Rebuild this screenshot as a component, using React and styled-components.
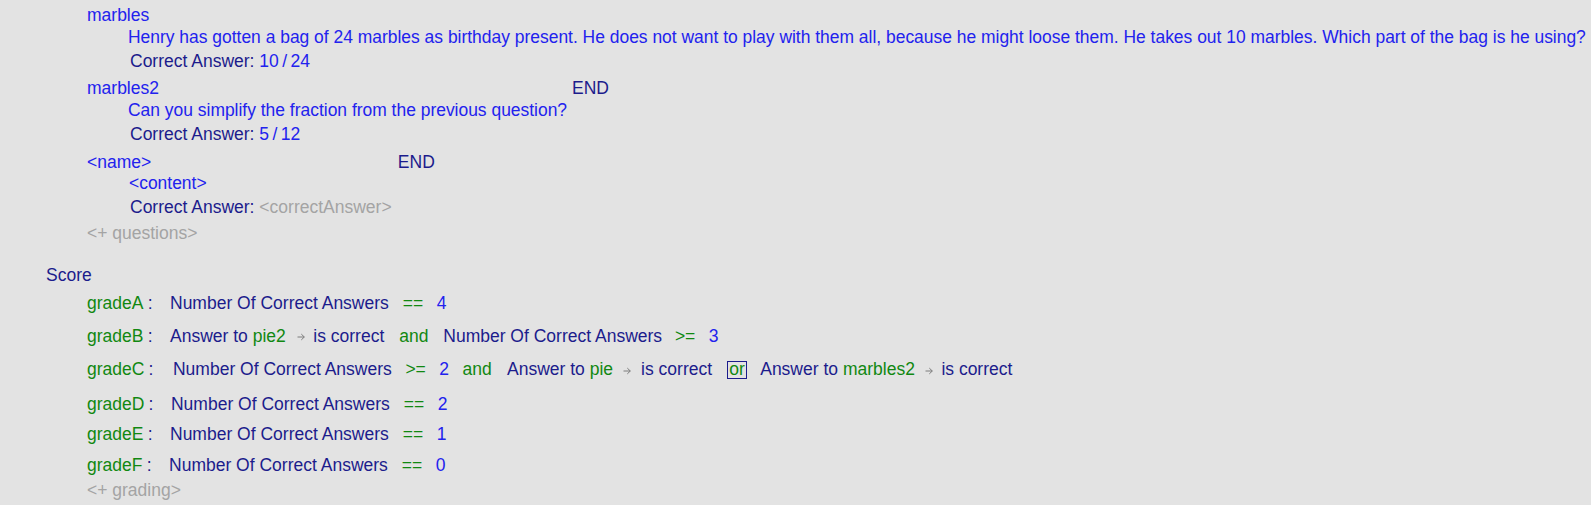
import React from 'react';
import styled, { createGlobalStyle } from 'styled-components';

const Global = createGlobalStyle`
  html, body {
    margin: 0;
    background: #e3e3e3;
    overflow: hidden;
  }
  body {
    font-family: "Liberation Sans", Arial, sans-serif;
    font-size: 17.5px;
    line-height: 20px;
  }
`;

const BLUE = '#2222ee';
const NAVY = '#1c1c8c';
const GREEN = '#118811';
const GRAY = '#a4a4a4';

const Page = styled.div`
  padding: 5.4px 0 0 46px;
  white-space: nowrap;
`;

const Questions = styled.div`
  margin-left: 41px;
`;

// name | END on the first line, the body rows sit under the name column
const QuestionBlock = styled.div`
  display: grid;
  grid-template-columns: max-content max-content;
  width: max-content;
  & + & {
    margin-top: 2px;
  }
`;

const Name = styled.div`
  color: ${BLUE};
  height: 21.3px;
`;

const End = styled.div`
  color: ${NAVY};
  margin-left: 5px;
`;

const ContentRow = styled.div`
  grid-column: 1;
  padding-left: ${p => (p.$placeholder ? 42 : 41)}px;
  height: 24.4px;
  color: ${BLUE};
  font-size: 17.45px;
`;

const CorrectRow = styled.div`
  grid-column: 1;
  padding: 0 1.2px 0 43px;
  height: 25.4px;
  color: ${NAVY};
`;

const Value = styled.span`
  color: ${p => (p.$placeholder ? GRAY : BLUE)};
  word-spacing: ${p => (p.$placeholder ? 0 : -1.5)}px;
`;

const AddRow = styled.div`
  color: ${GRAY};
  height: 20px;
`;

const ScoreSection = styled.section`
  margin-top: 22.7px;
`;

const ScoreTitle = styled.div`
  color: ${NAVY};
  height: 20px;
  margin-bottom: 3px;
`;

const GradeRow = styled.div`
  padding-left: 41px;
  padding-top: ${p => 5 + (p.$top || 0)}px;
  padding-bottom: ${p => 5.5 + (p.$bottom || 0)}px;
  height: 20px;
`;

const GradeLabel = styled.span`
  color: ${GREEN};
`;

const Colon = styled.span`
  color: ${NAVY};
  margin-left: 4.2px;
`;

const Expr = styled.span`
  display: inline-block;
  margin-left: ${p => 17.5 + (p.$extra || 0)}px;
`;

const Text = styled.span`
  display: inline-block;
  color: ${NAVY};
  margin-left: ${p => (p.$first ? 0 : p.$gap ?? 14.8)}px;
`;

const Op = styled.span`
  display: inline-block;
  color: ${GREEN};
  margin-left: ${p => p.$gap ?? 13.6}px;
`;

const Num = styled.span`
  display: inline-block;
  color: ${BLUE};
  margin-left: 13.4px;
`;

const Ref = styled.span`
  color: ${GREEN};
`;

const OrBox = styled.span`
  display: inline-block;
  color: ${GREEN};
  border: 1px solid ${NAVY};
  padding: 0 1.3px;
  line-height: 15.5px;
  margin-left: 14.8px;
`;

const ArrowIcon = styled.svg`
  display: inline-block;
  margin: 0 ${p => p.$after}px 0 ${p => p.$before}px;
  vertical-align: 0.5px;
`;

const Arrow = ({ before = 11.5, after = 8 }) => (
  <ArrowIcon width="8" height="8" viewBox="0 0 8 8" $before={before} $after={after}>
    <path d="M0.5 4H7.3M4.3 1.1L7.3 4L4.3 6.9" stroke="#7c7c7c" strokeWidth="1" fill="none" />
  </ArrowIcon>
);

const AnswerCheck = ({ target, first, gap, before, after }) => (
  <Text $first={first} $gap={gap}>
    Answer to <Ref>{target}</Ref>
    <Arrow before={before} after={after} />
    is correct
  </Text>
);

const Count = ({ first, gap }) => (
  <Text $first={first} $gap={gap}>
    Number Of Correct Answers
  </Text>
);

const questions = [
  {
    name: 'marbles',
    content:
      'Henry has gotten a bag of 24 marbles as birthday present. He does not want to play with them all, because he might loose them. He takes out 10 marbles. Which part of the bag is he using?',
    answer: '10 / 24',
  },
  {
    name: 'marbles2',
    content: 'Can you simplify the fraction from the previous question?',
    answer: '5 / 12',
  },
  {
    name: '<name>',
    content: '<content>',
    answer: '<correctAnswer>',
    placeholder: true,
  },
];

const simpleGrades = [
  { label: 'gradeD', value: '2' },
  { label: 'gradeE', value: '1' },
  { label: 'gradeF', value: '0' },
];

export default function App() {
  return (
    <>
      <Global />
      <Page>
        <Questions>
          {questions.map(q => (
            <QuestionBlock key={q.name}>
              <Name>{q.name}</Name>
              <End>END</End>
              <ContentRow $placeholder={q.placeholder}>{q.content}</ContentRow>
              <CorrectRow>
                Correct Answer: <Value $placeholder={q.placeholder}>{q.answer}</Value>
              </CorrectRow>
            </QuestionBlock>
          ))}
          <AddRow>{'<+ questions>'}</AddRow>
        </Questions>

        <ScoreSection>
          <ScoreTitle>Score</ScoreTitle>

          <GradeRow>
            <GradeLabel>gradeA</GradeLabel>
            <Colon>:</Colon>
            <Expr>
              <Count first />
              <Op $gap={14}>==</Op>
              <Num>4</Num>
            </Expr>
          </GradeRow>

          <GradeRow $top={2} $bottom={1}>
            <GradeLabel>gradeB</GradeLabel>
            <Colon>:</Colon>
            <Expr>
              <AnswerCheck target="pie2" first />
              <Op $gap={15}>and</Op>
              <Count />
              <Op $gap={12.8}>&gt;=</Op>
              <Num>3</Num>
            </Expr>
          </GradeRow>

          <GradeRow $top={2} $bottom={4}>
            <GradeLabel>gradeC</GradeLabel>
            <Colon>:</Colon>
            <Expr $extra={2}>
              <Count first />
              <Op>&gt;=</Op>
              <Num>2</Num>
              <Op>and</Op>
              <AnswerCheck target="pie" gap={15.3} before={10} after={10} />
              <OrBox>or</OrBox>
              <AnswerCheck target="marbles2" gap={13.2} before={10.5} after={8} />
            </Expr>
          </GradeRow>

          {simpleGrades.map(g => (
            <GradeRow key={g.label}>
              <GradeLabel>{g.label}</GradeLabel>
              <Colon>:</Colon>
              <Expr>
                <Count first />
                <Op $gap={14}>==</Op>
                <Num>{g.value}</Num>
              </Expr>
            </GradeRow>
          ))}

          <GradeRow $top={-5}>
            <AddRow>{'<+ grading>'}</AddRow>
          </GradeRow>
        </ScoreSection>
      </Page>
    </>
  );
}
